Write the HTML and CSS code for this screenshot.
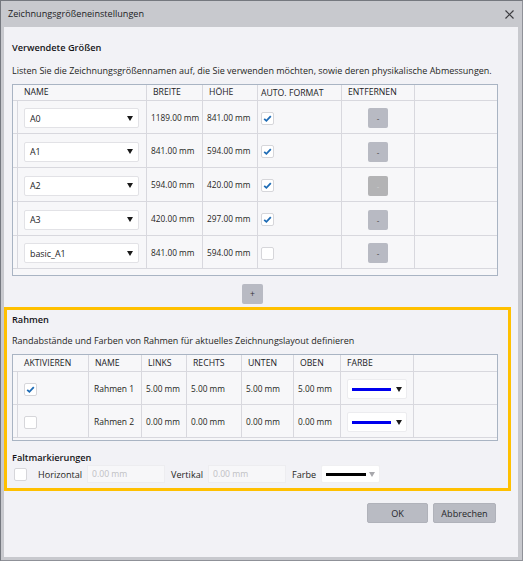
FILE: index.html
```html
<!DOCTYPE html>
<html lang="de">
<head>
<meta charset="utf-8">
<title>Zeichnungsgrößeneinstellungen</title>
<link rel="stylesheet" href="styles.css">
</head>
<body>
<div class="window">
  <div class="titlebar">
    <span class="title">Zeichnungsgrößeneinstellungen</span>
    <svg class="close" width="9" height="9" viewBox="0 0 9 9"><path d="M0.5 0.5 L8.5 8.5 M8.5 0.5 L0.5 8.5" stroke="#3c3c40" stroke-width="1.2" fill="none"/></svg>
  </div>
  <div class="content">
    <h2 class="heading">Verwendete Größen</h2>
    <p class="desc">Listen Sie die Zeichnungsgrößennamen auf, die Sie verwenden möchten, sowie deren physikalische Abmessungen.</p>

    <div class="grid-box sizes">
      <div class="row head">
        <div class="cell rh"></div>
        <div class="cell th">NAME</div>
        <div class="cell th">BREITE</div>
        <div class="cell th">HÖHE</div>
        <div class="cell th auto">AUTO. FORMAT</div>
        <div class="cell th">ENTFERNEN</div>
        <div class="cell rest"></div>
      </div>
      <div class="row body first">
        <div class="cell rh"></div>
        <div class="cell name"><div class="select"><span>A0</span><i class="caret"></i></div></div>
        <div class="cell val">1189.00 mm</div>
        <div class="cell val">841.00 mm</div>
        <div class="cell auto"><span class="check"><svg width="13" height="13" viewBox="0 0 13 13"><path d="M3.2 6.8 L5.4 8.8 L9.8 4.2" stroke="#1d6bb5" stroke-width="1.8" fill="none"/></svg></span></div>
        <div class="cell del"><span class="sq">-</span></div>
        <div class="cell rest"></div>
      </div>
      <div class="row body">
        <div class="cell rh"></div>
        <div class="cell name"><div class="select"><span>A1</span><i class="caret"></i></div></div>
        <div class="cell val">841.00 mm</div>
        <div class="cell val">594.00 mm</div>
        <div class="cell auto"><span class="check"><svg width="13" height="13" viewBox="0 0 13 13"><path d="M3.2 6.8 L5.4 8.8 L9.8 4.2" stroke="#1d6bb5" stroke-width="1.8" fill="none"/></svg></span></div>
        <div class="cell del"><span class="sq">-</span></div>
        <div class="cell rest"></div>
      </div>
      <div class="row body">
        <div class="cell rh"></div>
        <div class="cell name"><div class="select"><span>A2</span><i class="caret"></i></div></div>
        <div class="cell val">594.00 mm</div>
        <div class="cell val">420.00 mm</div>
        <div class="cell auto"><span class="check"><svg width="13" height="13" viewBox="0 0 13 13"><path d="M3.2 6.8 L5.4 8.8 L9.8 4.2" stroke="#1d6bb5" stroke-width="1.8" fill="none"/></svg></span></div>
        <div class="cell del"><span class="sq disabled">-</span></div>
        <div class="cell rest"></div>
      </div>
      <div class="row body">
        <div class="cell rh"></div>
        <div class="cell name"><div class="select"><span>A3</span><i class="caret"></i></div></div>
        <div class="cell val">420.00 mm</div>
        <div class="cell val">297.00 mm</div>
        <div class="cell auto"><span class="check"><svg width="13" height="13" viewBox="0 0 13 13"><path d="M3.2 6.8 L5.4 8.8 L9.8 4.2" stroke="#1d6bb5" stroke-width="1.8" fill="none"/></svg></span></div>
        <div class="cell del"><span class="sq">-</span></div>
        <div class="cell rest"></div>
      </div>
      <div class="row body last">
        <div class="cell rh"></div>
        <div class="cell name"><div class="select"><span>basic_A1</span><i class="caret"></i></div></div>
        <div class="cell val">841.00 mm</div>
        <div class="cell val">594.00 mm</div>
        <div class="cell auto"><span class="check"></span></div>
        <div class="cell del"><span class="sq">-</span></div>
        <div class="cell rest"></div>
      </div>
    </div>

    <div class="add-row"><span class="sq add">+</span></div>

    <div class="highlight">
      <h2 class="heading">Rahmen</h2>
      <p class="desc">Randabstände und Farben von Rahmen für aktuelles Zeichnungslayout definieren</p>
      <div class="grid-box frames">
        <div class="row head">
          <div class="cell rh"></div>
          <div class="cell th">AKTIVIEREN</div>
          <div class="cell th">NAME</div>
          <div class="cell th">LINKS</div>
          <div class="cell th">RECHTS</div>
          <div class="cell th">UNTEN</div>
          <div class="cell th">OBEN</div>
          <div class="cell th">FARBE</div>
          <div class="cell rest"></div>
        </div>
        <div class="row body">
          <div class="cell rh"></div>
          <div class="cell act"><span class="check"><svg width="13" height="13" viewBox="0 0 13 13"><path d="M3.2 6.8 L5.4 8.8 L9.8 4.2" stroke="#1d6bb5" stroke-width="1.8" fill="none"/></svg></span></div>
          <div class="cell fname">Rahmen 1</div>
          <div class="cell val">5.00 mm</div>
          <div class="cell val">5.00 mm</div>
          <div class="cell val">5.00 mm</div>
          <div class="cell val">5.00 mm</div>
          <div class="cell color"><div class="color-select"><i class="line blue"></i><i class="caret"></i></div></div>
          <div class="cell rest"></div>
        </div>
        <div class="row body">
          <div class="cell rh"></div>
          <div class="cell act"><span class="check"></span></div>
          <div class="cell fname">Rahmen 2</div>
          <div class="cell val">0.00 mm</div>
          <div class="cell val">0.00 mm</div>
          <div class="cell val">0.00 mm</div>
          <div class="cell val">0.00 mm</div>
          <div class="cell color"><div class="color-select"><i class="line blue"></i><i class="caret"></i></div></div>
          <div class="cell rest"></div>
        </div>
      </div>

      <h3 class="subheading">Faltmarkierungen</h3>
      <div class="fold-row">
        <span class="check fold-check"></span>
        <span class="label first-label">Horizontal</span>
        <span class="input">0.00 mm</span>
        <span class="label">Vertikal</span>
        <span class="input">0.00 mm</span>
        <span class="label">Farbe</span>
        <span class="color-select small"><i class="line black"></i><i class="caret light"></i></span>
      </div>
    </div>

    <div class="footer">
      <span class="btn">OK</span>
      <span class="btn">Abbrechen</span>
    </div>
  </div>
</div>
</body>
</html>
```

FILE: styles.css
```css
* { box-sizing: border-box; margin: 0; padding: 0; }
html, body { width: 523px; height: 561px; overflow: hidden; }
body {
  font-family: "Open Sans", "Noto Sans", sans-serif;
  font-size: 9.1px;
  color: #1f1f23;
  background: #c8c9ce;
}
.window {
  width: 523px;
  height: 561px;
  border: 1px solid #75787f;
  border-right-color: #8f9198;
  border-bottom-color: #8f9198;
  background: #c8c9ce;
  padding: 0 4px 3px 3px;
  display: flex;
  flex-direction: column;
}
.titlebar {
  height: 26px;
  flex: none;
  display: flex;
  align-items: center;
  justify-content: space-between;
  padding: 0 4px;
}
.title { font-size: 9.1px; color: #1c1c1f; line-height: 12px; }
.close { display: block; margin-top: 1px; }

.content {
  flex: 1;
  background: #f2f2f6;
  padding: 14px 20px 0 8px;
  display: flex;
  flex-direction: column;
}
.heading {
  font-size: 9.2px;
  font-weight: 600;
  line-height: 14px;
  color: #151518;
}
.desc { line-height: 14px; margin-top: 9px; color: #1f1f23; font-size: 9.0px; }

.grid-box {
  width: 486px;
  border: 1px solid #a9b4c3;
  background: #f7f7f9;
  margin-top: 6px;
}
.sizes { padding-bottom: 6px; }
.frames { padding-bottom: 2px; }

.row { display: grid; }
.sizes .row { grid-template-columns: 5px 129px 56px 55px 84px 73px 1fr; }
.frames .row { grid-template-columns: 5px 71px 53px 45px 55px 52px 47px 73px 1fr; }

.cell {
  border-right: 1px solid #d8d8de;
  border-bottom: 1px solid #d8d8de;
  display: flex;
  align-items: center;
  min-width: 0;
  white-space: nowrap;
}
.cell.rest { border-right: none; }
.head .cell.rh { border-right: none; }
.sizes .head { height: 16px; }
.frames .head { height: 17px; }
.sizes .body { height: 34px; }
.sizes .body.first, .sizes .body.last { height: 33px; }
.frames .body { height: 33px; }

.th {
  font-size: 8.7px;
  color: #222226;
  padding-left: 6px;
  padding-bottom: 1px;
}
.sizes .th.auto { padding-left: 3px; }
.val { font-size: 8.3px; padding-left: 4px; color: #1f1f23; }
.fname { font-size: 8.5px; padding-left: 5px; }

.name { padding-left: 6px; padding-top: 2px; }
.select {
  width: 115px;
  height: 20px;
  background: #fff;
  border: 1px solid #e2e2e6;
  border-radius: 2px;
  display: flex;
  align-items: center;
  justify-content: space-between;
  padding: 0 5px 0 5px;
  font-size: 8.9px;
  color: #1a1a1d;
}
.caret {
  display: block;
  width: 0;
  height: 0;
  border-left: 3.5px solid transparent;
  border-right: 3.5px solid transparent;
  border-top: 5px solid #1a1a1a;
}
.caret.light { border-top-color: #a8a8ac; }

.check {
  display: block;
  width: 13px;
  height: 13px;
  background: #fff;
  border: 1px solid #d6d6da;
  border-radius: 2px;
  position: relative;
}
.check svg { position: absolute; left: -1px; top: -1px; }
.sizes .auto { padding-left: 3px; padding-top: 2px; }
.act { padding-left: 6px; padding-top: 2px; }

.del { justify-content: center; padding-top: 2px; }
.sq {
  display: flex;
  align-items: center;
  justify-content: center;
  width: 20px;
  height: 20px;
  background: #b8bac3;
  border-radius: 2px;
  font-size: 8px;
  color: #333;
  line-height: 1;
}
.sq.disabled { background: #b3b3b5; color: #d0d0d2; }

.add-row { margin-top: 8px; padding-left: 230px; }
.sq.add { width: 21px; font-size: 8.5px; }

.highlight {
  margin: 3px -13px 0 -8px;
  border: 3px solid #ffc000;
  height: 184px;
  padding: 3px 10px 5px 5px;
}
.highlight .desc { margin-top: 7px; }
.color { padding-left: 6px; padding-top: 2px; }
.color-select {
  width: 60px;
  height: 20px;
  background: #fff;
  border: 1px solid #ececef;
  border-radius: 2px;
  display: flex;
  align-items: center;
  padding-left: 4px;
}
.color-select .line { display: block; width: 39px; height: 3px; }
.color-select .caret { margin-left: 5px; }
.line.blue { background: #0000ee; }
.line.black { background: #000; }
.color-select.small { width: 59px; height: 18px; border-color: #f0f0f2; }
.color-select.small .line { width: 40px; }
.color-select.small .caret { margin-left: 3px; }

.subheading {
  font-size: 9.2px;
  font-weight: 600;
  line-height: 14px;
  margin-top: 10px;
  color: #151518;
}
.fold-row { display: flex; align-items: center; height: 18px; }
.fold-check { margin-left: 2px; }
.label { margin-left: 6px; margin-right: 5px; color: #1f1f23; }
.first-label { margin-left: 11px; }
.input {
  width: 78px;
  height: 18px;
  background: #f7f7f9;
  border: 1px solid #ededf0;
  display: flex;
  align-items: center;
  padding-left: 4px;
  color: #c0c0c4;
  font-size: 8.6px;
}

.footer {
  margin-top: 12px;
  display: flex;
  justify-content: flex-end;
  gap: 5px;
  padding-right: 2px;
}
.btn {
  height: 20px;
  background: #b9bbc3;
  border: 1px solid #b0b2ba;
  border-radius: 2px;
  display: flex;
  align-items: center;
  justify-content: center;
  color: #26262a;
  font-size: 9.1px;
}
.btn:first-child { width: 61px; }
.btn:last-child { width: 63px; }
```
